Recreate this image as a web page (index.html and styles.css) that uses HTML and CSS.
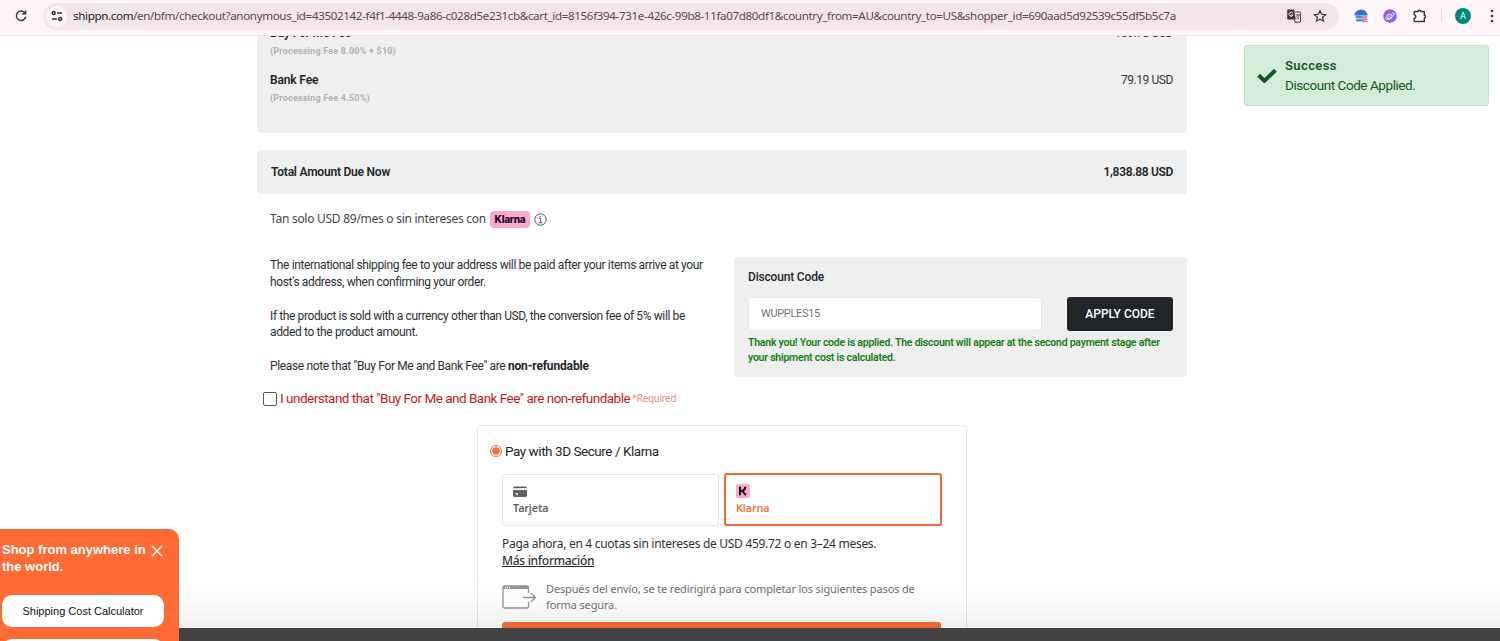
FILE: index.html
```html
<!DOCTYPE html>
<html lang="en">
<head>
<meta charset="utf-8">
<title>Checkout</title>
<link rel="stylesheet" href="styles.css">
</head>
<body>
<header class="toolbar">
  <svg class="reload" width="14" height="14" viewBox="0 0 14 14" fill="none" stroke="#4a3339" stroke-width="1.5"><path d="M11 4A4.700 4.700 0 1 0 11.700 7.800"/><path d="M11.600 1.500v3.300H8.200"/></svg>
  <div class="address">
    <span class="site-info"><svg width="12" height="12" viewBox="0 0 12 12" fill="none" stroke="#3c2c30" stroke-width="1.5"><circle cx="2.7" cy="3" r="1.5"/><path d="M6 3h5M1 9h5"/><circle cx="9.2" cy="9" r="1.5"/></svg></span>
    <span class="url"><span class="host">shippn.com</span>/en/bfm/checkout?anonymous_id=43502142-f4f1-4448-9a86-c028d5e231cb&amp;cart_id=8156f394-731e-426c-99b8-11fa07d80df1&amp;country_from=AU&amp;country_to=US&amp;shopper_id=690aad5d92539c55df5b5c7a</span>
    <svg class="translate" width="14" height="14" viewBox="0 0 14 14"><path d="M1 .5h6l1.8 10H1a.8.8 0 0 1-.8-.8V1.300A.8.8 0 0 1 1 .5z" fill="#443338"/><path d="M8 3h5a.6.6 0 0 1 .6.6v9a.6.6 0 0 1-.6.6H8l-.7-2.700" fill="none" stroke="#443338"/><path d="M5.800 4.100A2 2 0 1 0 6 6H4.200" fill="none" stroke="#fff"/><path d="M8.800 6h4M10.700 5v1M12 6c-.3 1.800-1.300 3-2.700 4M9.600 7.300c.5 1.100 1.300 1.900 2.400 2.600" fill="none" stroke="#443338" stroke-width=".8"/></svg>
    <svg class="star" width="14" height="14" viewBox="0 0 14 14" fill="none" stroke="#443338" stroke-width="1.200"><path d="M7 1.600l1.600 3.600 4 .4-3 2.600.9 3.900L7 10.100l-3.500 2 .9-3.900-3-2.600 4-.4z"/></svg>
  </div>
  <svg class="ext-shop" width="14" height="14" viewBox="0 0 14 14"><path d="M.8 6A6.200 5.500 0 0 1 13.200 6z" fill="#2f6fe0"/><path d="M1 5h12v7H2z" fill="#a9c9fa"/><path d="M.5 5.500h13M2 8h6" stroke="#3274e4" stroke-width="1.400"/><path d="M2.500 11.500h6" stroke="#3274e4" stroke-width="1.800"/><path d="M8 7.500h5.500v1.200H8zM8 9.700h5.500v1.200H8zM8 11.900h5.500v1.200H8z" fill="#e66a76"/></svg>
  <svg class="ext-orbit" width="14" height="14" viewBox="0 0 14 14"><circle cx="7" cy="7" r="6.800" fill="#8f5cf5"/><circle cx="6.500" cy="7.500" r="2.500" fill="none" stroke="#fff"/><path d="M3 8.500C2 11 5 11 8.500 8.200S12 3 9.300 4.200M5.500 8l2-1.500" fill="none" stroke="#fff" stroke-width=".9"/></svg>
  <svg class="puzzle" width="14" height="14" viewBox="0 0 14 14" fill="none" stroke="#443338" stroke-width="1.500" stroke-linejoin="round"><path d="M1.200 2.500h3.800c0-1.700 2.600-1.700 2.600 0h3.700v3.800c1.700 0 1.700 2.600 0 2.600v3.700H1.200V9.300c2.200-.1 2.200-3.400 0-3.500z"/></svg>
  <span class="divider"></span>
  <span class="avatar">A</span>
  <svg class="kebab" width="4" height="14" viewBox="0 0 4 14" fill="#443338"><circle cx="2" cy="2" r="1.300"/><circle cx="2" cy="7" r="1.300"/><circle cx="2" cy="12" r="1.300"/></svg>
</header>

<div class="viewport">
  <main class="checkout">
    <section class="panel fees">
      <div class="fee"><div><b class="fee-name">Buy For Me Fee</b><small>(Processing Fee 8.00% + $10)</small></div><span class="amount">159.78 USD</span></div>
      <div class="fee"><div><b class="fee-name">Bank Fee</b><small>(Processing Fee 4.50%)</small></div><span class="amount">79.19 USD</span></div>
    </section>
    <section class="panel total"><b class="total-name">Total Amount Due Now</b><b class="total-sum">1,838.88 USD</b></section>
    <div class="promo">
      <span class="promo-text">Tan solo USD 89/mes o sin intereses con</span><span class="klarna-badge">Klarna</span>
      <svg width="13" height="13" viewBox="0 0 13 13" fill="none" stroke="#555"><circle cx="6.500" cy="6.500" r="5.700"/><path d="M5 5.500h1.700v4M4.800 9.700h3.600M6.300 3v1.300"/></svg>
    </div>
    <div class="columns">
      <div class="notes">
        <p><span class="n1">The international shipping fee to your address will be paid after your items arrive at your</span><br><span class="n2">host's address, when confirming your order.</span></p>
        <p><span class="n3">If the product is sold with a currency other than USD, the conversion fee of 5% will be</span><br><span class="n4">added to the product amount.</span></p>
        <p><span class="n5">Please note that "Buy For Me and Bank Fee" are</span> <b>non-refundable</b></p>
      </div>
      <section class="panel discount">
        <div class="discount-title">Discount Code</div>
        <div class="discount-row"><div class="code-field">WUPPLES15</div><div class="apply">APPLY CODE</div></div>
        <p class="thanks">Thank you! Your code is applied. The discount will appear at the second payment stage after<br>your shipment cost is calculated.</p>
      </section>
    </div>
    <div class="consent"><span class="checkbox"></span><span class="consent-text">I understand that "Buy For Me and Bank Fee" are non-refundable</span><span class="required">*Required</span></div>
    <section class="payment">
      <div class="method"><span class="radio"></span><span class="method-name">Pay with 3D Secure / Klarna</span></div>
      <div class="tabs">
        <div class="tab"><svg width="14" height="12" viewBox="0 0 14 12"><path d="M1.500.5h11A1.500 1.500 0 0 1 14 2v.2H0V2A1.500 1.500 0 0 1 1.500.5zM0 4h14v5.500a1.500 1.500 0 0 1-1.500 1.500h-11A1.500 1.500 0 0 1 0 9.500z" fill="#606060"/><rect x="2.500" y="7.300" width="2.500" height="1.400" fill="#fff"/></svg><span class="tab-name">Tarjeta</span></div>
        <div class="tab selected"><svg width="14" height="14" viewBox="0 0 14 14"><rect width="14" height="14" rx="2" fill="#ffa8cd"/><path d="M4 2.800v8.400M9.300 2.800C9.300 5.200 7.300 6.800 4.500 7M6.200 6.700l3.600 4.500" fill="none" stroke="#16051a" stroke-width="2"/></svg><span class="tab-name klarna-name">Klarna</span></div>
      </div>
      <p class="offer">Paga ahora, en 4 cuotas sin intereses de USD 459.72 o en 3–24 meses.<br><u>Más información</u></p>
      <div class="redirect">
        <svg width="36" height="24" viewBox="0 0 36 24" fill="none" stroke="#949494" stroke-width="1.300"><path d="M26.500 8V2.500A1.500 1.500 0 0 0 25 1H2.500A1.500 1.500 0 0 0 1 2.500v19A1.500 1.500 0 0 0 2.500 23H25a1.500 1.500 0 0 0 1.500-1.500V17"/><path d="M1 2.500h25.500" stroke-width="3"/><path d="M3 2.500h5" stroke="#fff" stroke-dasharray="1 1"/><path d="M21 12.500h12.500M29 8l4.500 4.500L29 17"/></svg>
        <p>Después del envío, se te redirigirá para completar los siguientes pasos de<br>forma segura.</p>
      </div>
      <div class="submit"></div>
    </section>
  </main>
  <div class="fade"></div>
</div>
<div class="bottom-bar"></div>

<aside class="toast">
  <svg width="20" height="16" viewBox="0 0 20 16" fill="none" stroke="#155724" stroke-width="4" stroke-linejoin="round"><path d="M1.600 7.200l5.800 5.700L18.400 2.200"/></svg>
  <div><b>Success</b><span>Discount Code Applied.</span></div>
</aside>

<aside class="widget">
  <div class="widget-head"><b>Shop from anywhere in<br>the world.</b><svg width="12" height="12" viewBox="0 0 12 12" stroke="#fff" stroke-width="1.500"><path d="M.8.8l10.400 10.400M11.200.8L.8 11.200"/></svg></div>
  <div class="widget-button">Shipping Cost Calculator</div>
  <div class="widget-button"></div>
</aside>
</body>
</html>
```
FILE: styles.css
```css
* { box-sizing: border-box; }
body { margin: 0; height: 641px; overflow: hidden; background: #fff; color: #212529; font-family: Roboto, sans-serif; font-size: 12px; display: flex; flex-direction: column; white-space: nowrap; }
p { margin: 0; }
svg { flex: none; display: block; }

.toolbar { height: 36px; flex: none; display: flex; align-items: center; padding: 0 0 4px 14px; background: #fff7f9; border-bottom: 1px solid #f6dfe6; }
.reload { margin-right: 15px; }
.address { width: 1296px; height: 27px; margin-top: 1px; border-radius: 14px; background: #f2e6eb; display: flex; align-items: center; padding-left: 3px; }
.site-info { width: 21px; height: 21px; border-radius: 50%; background: #fff7f9; display: flex; align-items: center; justify-content: center; }
.url { width: 1214px; margin-left: 6px; padding-bottom: 2px; font: 11.600px "Noto Sans", sans-serif; letter-spacing: -0.351px; color: #5b474d; }
.host { color: #241a1d; }
.star { margin-left: 12px; }
.ext-shop { margin-left: 15px; }
.ext-orbit { margin-left: 15px; }
.puzzle { margin-left: 16px; }
.divider { width: 1px; height: 13px; margin-left: 14px; background: #fbd3df; }
.avatar { width: 16px; height: 16px; margin-left: 13px; border-radius: 50%; background: #00897b; color: #fff; font-size: 9px; line-height: 16px; text-align: center; }
.kebab { margin-left: 19px; }

.viewport { height: 592px; flex: none; overflow: hidden; position: relative; }
.fade { position: absolute; left: 0; right: 0; bottom: 0; height: 48px; background: linear-gradient(rgba(0,0,0,0), rgba(0,0,0,.02) 50%, rgba(0,0,0,.065)); }
.bottom-bar { height: 13px; flex: none; background: #434343; }
.checkout { width: 930px; margin-left: 257px; }
.panel { background: #efefef; border-radius: 4px; }

.fees { height: 107px; margin-top: -10px; padding: 0 14px 0 13px; }
.fee { display: flex; justify-content: space-between; height: 47px; font-size: 12px; line-height: 14px; }
.fee b, .fee small { display: block; }
.fee-name { font-weight: 600; letter-spacing: -.15px; }
.fee small { margin-top: 4px; font-size: 9px; font-weight: 700; color: #b2b2b2; letter-spacing: .2px; }
.amount { letter-spacing: -.42px; color: #33373b; }
.total { height: 44px; margin-top: 17px; padding: 0 14px 1px; display: flex; align-items: center; justify-content: space-between; }
.total b { font-weight: 600; letter-spacing: -.22px; }
.total .total-sum { letter-spacing: -.33px; }
.promo { height: 20px; margin: 15px 0 0 13px; display: flex; align-items: center; color: #444; font: 12px/20px "Noto Sans", sans-serif; letter-spacing: -.27px; }
.promo-text { width: 220px; }
.klarna-badge { width: 40px; height: 17px; margin-right: 4px; border-radius: 4px; background: #ffa8cd; color: #16051a; font: 800 10px/17px Inter, sans-serif; letter-spacing: -.3px; text-align: center; }

.columns { display: flex; justify-content: space-between; margin-top: 28px; height: 120px; }
.notes { padding-left: 13px; letter-spacing: -.36px; color: #2b2f33; }
.notes p { margin-bottom: 17px; line-height: 16.800px; }
.n3 { letter-spacing: -.385px; }
.notes b { font-weight: 700; letter-spacing: -.15px; color: #212529; }
.discount { width: 453px; padding: 12px 14px; }
.discount-title { font-weight: 500; line-height: 16px; letter-spacing: -.18px; }
.discount-row { display: flex; justify-content: space-between; margin-top: 12px; }
.code-field { width: 294px; height: 34px; padding-left: 12px; border: 1px solid #e6e6e6; border-radius: 4px; background: #fff; color: #757575; font-size: 11px; line-height: 32px; letter-spacing: -.33px; }
.apply { width: 106px; height: 34px; border-radius: 3px; background: #212529; color: #fff; font-weight: 500; line-height: 34px; text-align: center; }
.thanks { margin-top: 4px; color: #118011; font-size: 10.500px; font-weight: 600; line-height: 15px; letter-spacing: -.235px; }
.consent { height: 18px; margin: 12px 0 0 6px; display: flex; align-items: center; color: #c31b1b; font-size: 13.500px; letter-spacing: -.51px; }
.checkbox { width: 14px; height: 14px; margin-top: 1px; margin-right: 3px; border: 1px solid #565656; border-radius: 2px; }
.required { margin-left: 2px; padding-top: 1px; font-size: 10.500px; letter-spacing: -.2px; color: #f19384; }

.payment { width: 490px; height: 230px; margin: 18px 0 0 220px; padding: 16px 24px 0 12px; border: 1px solid #e8e8e8; border-radius: 5px; }
.method { display: flex; align-items: center; height: 18px; font-size: 13.500px; letter-spacing: -.45px; color: #212529; }
.radio { width: 12px; height: 12px; margin-right: 3px; border: 1px solid #ff6b35; border-radius: 50%; background: radial-gradient(#ff6b35 3.300px, #fff 4.300px); }
.tabs, .offer, .redirect, .submit { margin-left: 12px; }
.tabs { display: grid; grid-template-columns: 217px 218px; gap: 5px; margin-top: 13px; }
.tab { height: 52px; margin-top: .5px; padding: 10px 10px 0; border: 1px solid #e6e6e6; border-radius: 3px; color: #6d6e78; font: 600 10.800px/14px "Noto Sans", sans-serif; letter-spacing: -.15px; box-shadow: 0 1px 1px rgba(0,0,0,.03); }
.tab svg { height: 14px; margin-bottom: 2px; }
.tab-name { display: block; color: #606060; }
.tab.selected { border: 2px solid #ec6a3a; padding: 9px 10px 0; height: 53px; margin: 0; }
.tab.selected svg { margin-bottom: 3px; }
.klarna-name { color: #ff7440; }
.offer { margin-top: 9px; color: #303030; font: 12px/17px "Noto Sans", sans-serif; letter-spacing: -.29px; }
.offer u { font-weight: 500; text-underline-offset: 1px; }
.redirect { display: flex; align-items: center; gap: 8px; margin-top: 11px; height: 34px; color: #6d6e70; font: 11px/16px "Noto Sans", sans-serif; letter-spacing: -.14px; }
.submit { width: 439px; height: 40px; margin-top: 8px; border-radius: 3px; background: #ff6b35; }

.toast { position: absolute; left: 1244px; top: 45px; width: 245px; height: 61px; padding: 0 0 0 12px; display: flex; align-items: center; gap: 8px; border: 1px solid #c3e6cb; border-radius: 3px; background: #d4edda; color: #155724; }
.toast b, .toast span { display: block; font-size: 13px; line-height: 20px; }
.toast b { font-weight: 600; letter-spacing: .4px; }
.toast span { margin-top: -1px; margin-bottom: 1px; font-size: 13.500px; letter-spacing: -.44px; }

.widget { position: absolute; left: 0; top: 529px; width: 179px; height: 112px; padding: 12px 15px 0 2px; overflow: hidden; border-radius: 0 10px 0 0; background: #ff6b35; color: #fff; font-family: "Liberation Sans", sans-serif; }
.widget-head { display: flex; justify-content: space-between; font-size: 13px; line-height: 17px; }
.widget-head svg { margin-top: 4px; margin-right: 1px; }
.widget-button { width: 162px; height: 32px; border-radius: 10px; background: #fff; color: #111; font-size: 11px; line-height: 32px; text-align: center; }
.widget-head + .widget-button { margin: 20px 0 12px; }
```
